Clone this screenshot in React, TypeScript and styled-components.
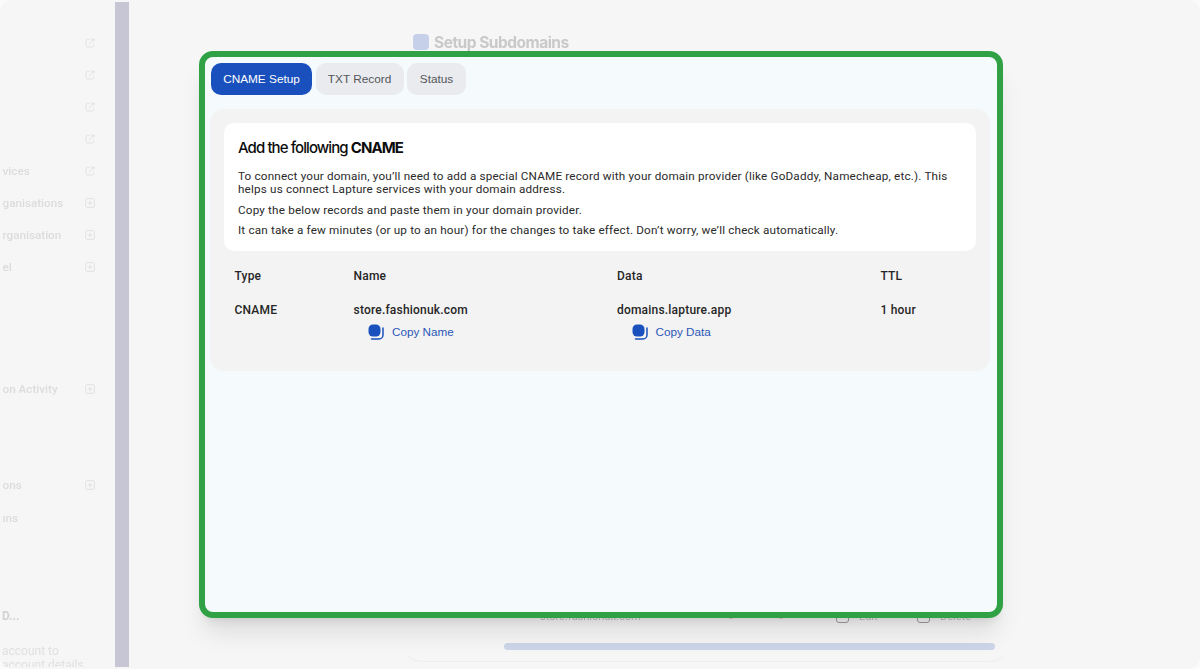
import React from "react";
import styled, { createGlobalStyle } from "styled-components";

const Global = createGlobalStyle`
  html, body { margin: 0; padding: 0; height: 100%; overflow: hidden; background: #fbfbfb; }
  #root { height: 669px; }
  * { box-sizing: border-box; }
`;

const Page = styled.div`
  position: relative;
  width: 1200px;
  height: 669px;
  overflow: hidden;
  border-radius: 12px;
  background: #f6f6f6;
  font-family: "Liberation Sans", sans-serif;
`;

const Backdrop = styled.div`
  display: flex;
  height: 100%;
  padding: 2px 0;
  filter: blur(0.5px);
`;

const Sidebar = styled.nav`
  width: 115px;
  flex: none;
  display: flex;
  flex-direction: column;
  padding-top: 25px;
  overflow: hidden;
`;

const NavRow = styled.div<{ $gap?: number }>`
  height: 32px;
  flex: none;
  margin-top: ${(p) => p.$gap ?? 0}px;
  display: flex;
  align-items: center;
  justify-content: space-between;
  padding: 0 20px 0 2.5px;
  font-family: Roboto, sans-serif;
  font-size: 11.7px;
  font-weight: 500;
  color: #dcdcdc;
`;

const NavIcon = styled.svg`
  width: 10px;
  height: 10px;
  flex: none;
  fill: none;
  stroke: #e2e2e2;
  stroke-width: 1;
`;

const Account = styled.div`
  margin-top: 75px;
  padding-left: 2px;
  font-family: Roboto, sans-serif;
  font-size: 12px;
  font-weight: 700;
  color: #d2d2d2;
`;

const AccountText = styled.div`
  margin-top: 22px;
  padding-left: 2px;
  font-family: Roboto, sans-serif;
  font-size: 12px;
  line-height: 13.5px;
  color: #e0e0e0;
  white-space: nowrap;
`;

const Divider = styled.div`
  width: 14px;
  flex: none;
  background: #c6c6d4;
`;

const Main = styled.main`
  flex: 1;
  display: flex;
  flex-direction: column;
  padding: 30px 0 5px 284px;
`;

const Title = styled.h1`
  margin: 0;
  display: flex;
  align-items: center;
  gap: 5px;
  height: 20px;
  font-family: Inter, sans-serif;
  font-size: 15.5px;
  font-weight: 700;
  letter-spacing: -0.5px;
  color: #c9c9c9;
`;

const TitleIcon = styled.span`
  width: 16px;
  height: 16px;
  border-radius: 4px;
  background: #c6d1e9;
`;

const BackCard = styled.section`
  flex: 1;
  margin-left: -11px;
  width: 608px;
  border-radius: 0 0 20px 20px;
  border: 1px solid transparent;
  border-bottom-color: #eeeeee;
  display: flex;
  flex-direction: column;
  justify-content: flex-end;
  padding: 0 14px 11px 101px;
`;

const BackRow = styled.div`
  display: flex;
  align-items: center;
  height: 14px;
  margin-bottom: 20px;
  font-family: Roboto, sans-serif;
  font-size: 11px;
  color: #bdbdbd;
`;

const BackName = styled.span`
  margin-left: 36px;
  width: 188px;
`;

const BackDot = styled.span`
  width: 6px;
  height: 6px;
  border-radius: 50%;
  margin-right: 44px;
  background: #e8c4bc;
`;

const BackIcon = styled.span`
  width: 13px;
  height: 13px;
  flex: none;
  margin-left: 8px;
  border: 1px solid #9c9c9c;
  border-radius: 3px;
`;

const BackAction = styled.span`
  margin-left: 10px;
  width: 50px;
`;

const ScrollBar = styled.div`
  height: 7px;
  border-radius: 4px;
  background: #cdd5e8;
`;

const Modal = styled.div`
  position: absolute;
  left: 199px;
  top: 51px;
  width: 804px;
  height: 567px;
  border: 6px solid #30a144;
  border-radius: 14px;
  background: #f5fafd;
  box-shadow: 0 20px 25px -5px rgba(0, 0, 0, 0.1), 0 8px 10px -6px rgba(0, 0, 0, 0.1);
  padding: 6px 6px 0 5px;
`;

const Tabs = styled.div`
  display: flex;
  gap: 3.5px;
  margin-left: 1px;
`;

const Tab = styled.div<{ $active?: boolean; $w: number }>`
  width: ${(p) => p.$w}px;
  height: 32px;
  display: flex;
  align-items: center;
  justify-content: center;
  border-radius: 10px;
  font-size: 11.8px;
  background: ${(p) => (p.$active ? "#1a50bd" : "#e9ebef")};
  color: ${(p) => (p.$active ? "#ffffff" : "#54565b")};
`;

const Panel = styled.section`
  margin-top: 14px;
  width: 780px;
  height: 262px;
  border-radius: 14px;
  background: #f3f3f3;
  padding: 14px;
`;

const Intro = styled.div`
  height: 128px;
  border-radius: 10px;
  background: #ffffff;
  padding: 15px 14px 0;
  font-family: Roboto, sans-serif;
  font-size: 11.7px;
  line-height: 13.4px;
  letter-spacing: 0.18px;
  color: #2a2a2a;
`;

const Heading = styled.h2`
  margin: 0 0 12px;
  font-family: Inter, sans-serif;
  font-size: 15px;
  line-height: 20px;
  font-weight: 500;
  letter-spacing: -0.92px;
  color: #0c0c0c;
  b { font-weight: 700; }
`;

const Para = styled.p`
  margin: 0 0 7px;
`;

const Table = styled.div`
  display: grid;
  grid-template-columns: 119px 263.5px 263.5px 1fr;
  margin-top: 18px;
  padding-left: 10.5px;
  font-family: Roboto, sans-serif;
  font-size: 12px;
  font-weight: 500;
  letter-spacing: 0.2px;
  color: #262626;
`;

const HeadCell = styled.div`
  height: 34px;
  line-height: 14px;
`;

const Cell = styled.div`
  line-height: 14px;
`;

const CopyRow = styled.div`
  display: flex;
  align-items: center;
  gap: 8px;
  margin: 7px 0 0 14.5px;
  font-family: "Liberation Sans", sans-serif;
  font-size: 11.7px;
  font-weight: 400;
  letter-spacing: 0;
  color: #2a57b8;
`;

const CopyGlyph = styled.svg`
  width: 16px;
  height: 16px;
  flex: none;
`;

const Copy = ({ label }: { label: string }) => (
  <CopyRow>
    <CopyGlyph viewBox="0 0 16 16">
      <path d="M3.5 15h7.5a4 4 0 0 0 4-4V4" fill="none" stroke="#1a50bd" strokeWidth="1.5" strokeLinecap="round" />
      <rect x="0.5" y="0.5" width="12" height="12" rx="4.5" fill="#1a50bd" />
    </CopyGlyph>
    {label}
  </CopyRow>
);

const arrow = (
  <NavIcon viewBox="0 0 10 10">
    <path d="M8.500 5.500v2a1.500 1.500 0 0 1-1.500 1.500H2.500A1.500 1.500 0 0 1 1 7.500V3a1.500 1.500 0 0 1 1.500-1.500h2M4 6l5-5M6 1h3v3" />
  </NavIcon>
);
const plus = (
  <NavIcon viewBox="0 0 10 10">
    <rect x="0.700" y="0.700" width="8.600" height="8.600" rx="0.800" />
    <path d="M5 2.800v4.400M2.800 5h4.400" />
  </NavIcon>
);

export default function App() {
  return (
    <Page>
      <Global />
      <Backdrop>
        <Sidebar>
          <NavRow>&nbsp;{arrow}</NavRow>
          <NavRow>&nbsp;{arrow}</NavRow>
          <NavRow>&nbsp;{arrow}</NavRow>
          <NavRow>&nbsp;{arrow}</NavRow>
          <NavRow>vices{arrow}</NavRow>
          <NavRow>ganisations{plus}</NavRow>
          <NavRow>rganisation{plus}</NavRow>
          <NavRow>el{plus}</NavRow>
          <NavRow $gap={90}>on Activity{plus}</NavRow>
          <NavRow $gap={64}>ons{plus}</NavRow>
          <NavRow $gap={1}>ıns&nbsp;</NavRow>
          <Account>D...</Account>
          <AccountText>
            account to
            <br />
            account details
          </AccountText>
        </Sidebar>
        <Divider />
        <Main>
          <Title>
            <TitleIcon />
            Setup Subdomains
          </Title>
          <BackCard>
            <BackRow>
              <BackName>store.fashionuk.com</BackName>
              <BackDot />
              <BackDot />
              <BackIcon />
              <BackAction>Edit</BackAction>
              <BackIcon />
              <BackAction>Delete</BackAction>
            </BackRow>
            <ScrollBar />
          </BackCard>
        </Main>
      </Backdrop>
      <Modal>
        <Tabs>
          <Tab $active $w={101}>CNAME Setup</Tab>
          <Tab $w={88}>TXT Record</Tab>
          <Tab $w={59}>Status</Tab>
        </Tabs>
        <Panel>
          <Intro>
            <Heading>
              Add the following <b>CNAME</b>
            </Heading>
            <Para>
              To connect your domain, you’ll need to add a special CNAME record with your domain provider (like GoDaddy, Namecheap, etc.). This helps us connect Lapture services with your domain address.
            </Para>
            <Para>Copy the below records and paste them in your domain provider.</Para>
            <Para>It can take a few minutes (or up to an hour) for the changes to take effect. Don’t worry, we’ll check automatically.</Para>
          </Intro>
          <Table>
            <HeadCell>Type</HeadCell>
            <HeadCell>Name</HeadCell>
            <HeadCell>Data</HeadCell>
            <HeadCell>TTL</HeadCell>
            <Cell>CNAME</Cell>
            <Cell>
              store.fashionuk.com
              <Copy label="Copy Name" />
            </Cell>
            <Cell>
              domains.lapture.app
              <Copy label="Copy Data" />
            </Cell>
            <Cell>1 hour</Cell>
          </Table>
        </Panel>
      </Modal>
    </Page>
  );
}
